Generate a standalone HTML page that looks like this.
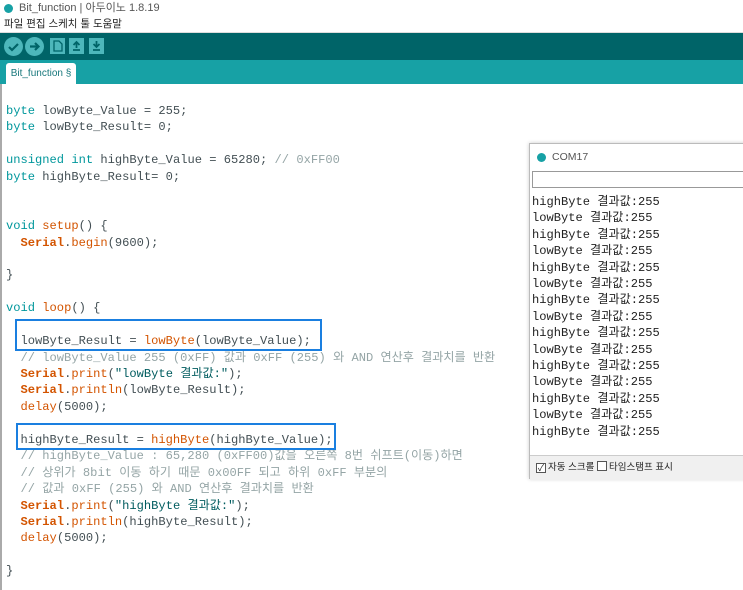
<!DOCTYPE html>
<html><head><meta charset="utf-8"><style>
*{margin:0;padding:0;box-sizing:border-box}
body{width:743px;height:590px;overflow:hidden;background:#fff;font-family:"Liberation Sans","Noto Sans CJK KR",sans-serif;position:relative}
#title{position:absolute;top:0;left:0;width:743px;height:16px;background:#fff;font-size:11px;color:#555;line-height:16px;padding-left:19px}
#title .ic{position:absolute;left:4px;top:4px;width:9px;height:9px;border-radius:50%;background:#17a1a5}
#menu{position:absolute;top:16px;left:0;width:743px;height:17px;background:#fff;font-size:10.5px;line-height:17px;padding-left:4px;color:#222;border-bottom:1px solid #ddd}
#tool{position:absolute;top:33px;left:0;width:743px;height:27px;background:#006468}
.cb{position:absolute;top:4px;width:19px;height:19px;border-radius:50%;background:#4db7bb}
.sq{position:absolute;top:5px;width:15px;height:16px;background:#4db7bb}
#tabs{position:absolute;top:60px;left:0;width:743px;height:24px;background:#17a1a5}
#tab{position:absolute;left:6px;top:3px;width:70px;height:21px;background:#fff;border-radius:3px 3px 0 0;font-size:10px;color:#17777b;line-height:22px;text-align:center}
#ed{position:absolute;top:84px;left:0;width:743px;height:506px;border-left:2px solid #aaa}
pre{position:absolute;left:6px;top:103px;font-family:"Liberation Mono","Noto Sans CJK KR",monospace;font-size:12.1px;line-height:16.43px;color:#434f54}
.k{color:#00979c}.f{color:#d35400}.s{color:#d35400;font-weight:bold}.c{color:#95a5a6}.q{color:#005c5f}
.box{position:absolute;border:2px solid #1a7fe0}
#mon{position:absolute;left:529px;top:143px;width:220px;height:336px;background:#fff;border:1px solid #bbb;box-shadow:0 0 4px rgba(0,0,0,.2)}
#mon .t{height:26px;font-size:10.5px;color:#555;line-height:26px;padding-left:22px;position:relative}
#mon .t i{position:absolute;left:7px;top:9px;width:9px;height:9px;border-radius:50%;background:#17a1a5}
#mon .in{position:absolute;left:2px;top:27px;width:220px;height:17px;border:1px solid #999}
#mon pre{left:2px;top:50px;font-size:12.1px;color:#222;line-height:16.4px}
#mon .bot{position:absolute;left:0;top:311px;width:220px;height:25px;border-top:1px solid #ccc;background:#f0f0f0;font-size:9.5px;line-height:24px;padding-left:6px;color:#222}
.chk{display:inline-block;width:10px;height:10px;border:1px solid #555;vertical-align:-1px;font-size:9px;line-height:9px;text-align:center;margin-right:2px;background:#fff}
</style></head><body>
<div id="title"><span class="ic"></span>Bit_function | 아두이노 1.8.19</div>
<div id="menu">파일 편집 스케치 툴 도움말</div>
<div id="tool">
<div class="cb" style="left:4px"><svg width="19" height="19"><path d="M5 10l3 3 6-6" stroke="#006468" stroke-width="2.2" fill="none"/></svg></div>
<div class="cb" style="left:25px"><svg width="19" height="19"><path d="M5 9.5h8M10 6l3.5 3.5L10 13" stroke="#006468" stroke-width="2.2" fill="none"/></svg></div>
<div class="sq" style="left:50px"><svg width="15" height="16"><path d="M4 3h5l3 3v7H4z" stroke="#006468" stroke-width="1.3" fill="none"/></svg></div>
<div class="sq" style="left:69px"><svg width="15" height="16"><path d="M7.5 4v6M4.5 7l3-3 3 3M4 12h7" stroke="#006468" stroke-width="1.8" fill="none"/></svg></div>
<div class="sq" style="left:89px"><svg width="15" height="16"><path d="M7.5 3v6M4.5 6l3 3 3-3M4 12h7" stroke="#006468" stroke-width="1.8" fill="none"/></svg></div>
</div>
<div id="tabs"><div id="tab">Bit_function §</div></div>
<div id="ed"></div>
<pre><span class="k">byte</span> lowByte_Value = 255;
<span class="k">byte</span> lowByte_Result= 0;

<span class="k">unsigned</span> <span class="k">int</span> highByte_Value = 65280; <span class="c">// 0xFF00</span>
<span class="k">byte</span> highByte_Result= 0;


<span class="k">void</span> <span class="f">setup</span>() {
  <span class="s">Serial</span>.<span class="f">begin</span>(9600);

}

<span class="k">void</span> <span class="f">loop</span>() {

  lowByte_Result = <span class="f">lowByte</span>(lowByte_Value);
  <span class="c">// lowByte_Value 255 (0xFF) 값과 0xFF (255) 와 AND 연산후 결과치를 반환</span>
  <span class="s">Serial</span>.<span class="f">print</span>(<span class="q">"lowByte 결과값:"</span>);
  <span class="s">Serial</span>.<span class="f">println</span>(lowByte_Result);
  <span class="f">delay</span>(5000);

  highByte_Result = <span class="f">highByte</span>(highByte_Value);
  <span class="c">// highByte_Value : 65,280 (0xFF00)값을 오른쪽 8번 쉬프트(이동)하면</span>
  <span class="c">// 상위가 8bit 이동 하기 때문 0x00FF 되고 하위 0xFF 부분의</span>
  <span class="c">// 값과 0xFF (255) 와 AND 연산후 결과치를 반환</span>
  <span class="s">Serial</span>.<span class="f">print</span>(<span class="q">"highByte 결과값:"</span>);
  <span class="s">Serial</span>.<span class="f">println</span>(highByte_Result);
  <span class="f">delay</span>(5000);

}</pre>
<div class="box" style="left:15px;top:319px;width:307px;height:32px"></div>
<div class="box" style="left:16px;top:423px;width:320px;height:27px"></div>
<div id="mon"><div class="t"><i></i>COM17</div><div class="in"></div>
<pre>highByte 결과값:255
lowByte 결과값:255
highByte 결과값:255
lowByte 결과값:255
highByte 결과값:255
lowByte 결과값:255
highByte 결과값:255
lowByte 결과값:255
highByte 결과값:255
lowByte 결과값:255
highByte 결과값:255
lowByte 결과값:255
highByte 결과값:255
lowByte 결과값:255
highByte 결과값:255</pre>
<div class="bot"><span class="chk">✓</span>자동 스크롤 <span class="chk"></span>타임스탬프 표시</div>
</div>
</body></html>
